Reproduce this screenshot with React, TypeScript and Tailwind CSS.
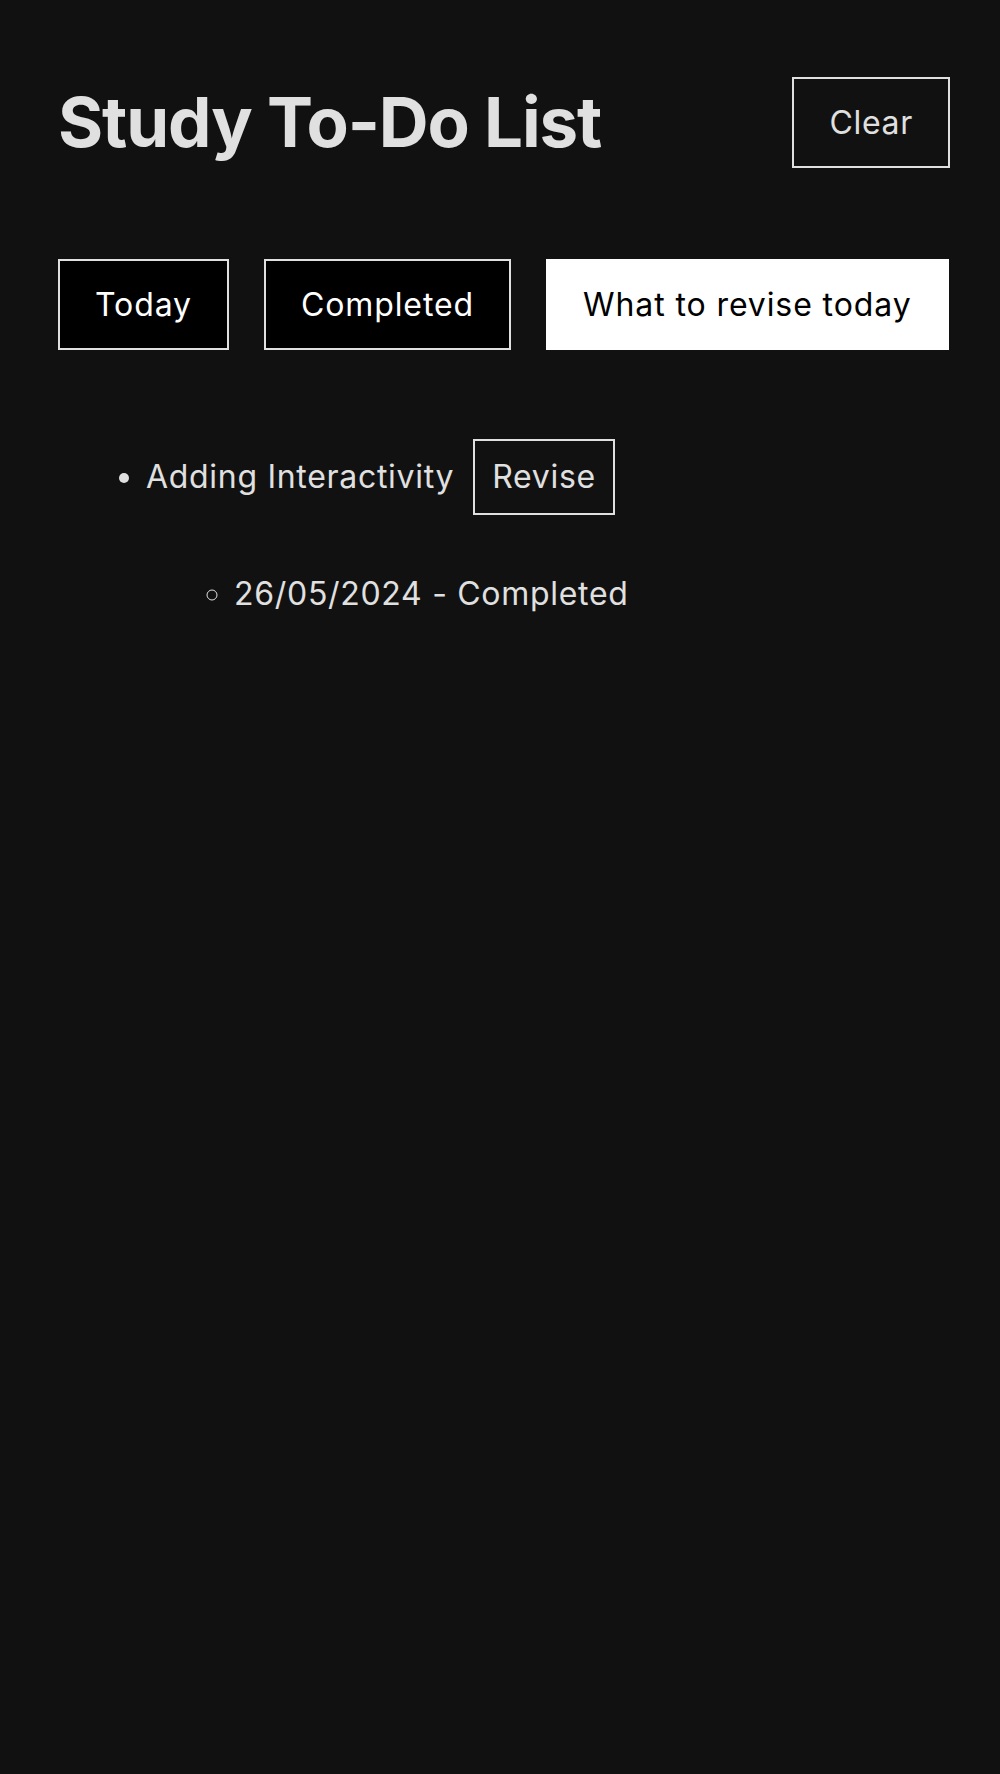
import React, { useState } from 'react';

const tabs = ['Today', 'Completed', 'What to revise today'];

export default function App() {
  const [active, setActive] = useState('What to revise today');

  return (
    <div
      className="min-h-screen bg-[#111111] text-[#e0e0e0] pl-[58px] pr-[50px] pt-[77px]"
      style={{ fontFamily: 'Inter, "Noto Sans", sans-serif' }}
    >
      {/* Header */}
      <div className="flex items-center justify-between">
        <h1 className="text-[69px] font-bold leading-none tracking-[-1.1px]">Study To-Do List</h1>
        <button className="whitespace-nowrap border-2 border-[#e0e0e0] px-[35px] py-[19px] text-[32px] leading-[49px] tracking-[0.7px] text-[#e0e0e0]">
          Clear
        </button>
      </div>

      {/* Tabs */}
      <div className="flex gap-[35px] mt-[91px]">
        {tabs.map((tab) => (
          <button
            key={tab}
            onClick={() => setActive(tab)}
            className={
              active === tab
                ? 'shrink-0 whitespace-nowrap border-2 border-white bg-white text-black px-[35px] py-[19px] text-[32px] leading-[49px] tracking-[0.9px]'
                : 'shrink-0 whitespace-nowrap border-2 border-[#e0e0e0] bg-black text-white px-[35px] py-[19px] text-[32px] leading-[49px] tracking-[0.9px]'
            }
          >
            {tab}
          </button>
        ))}
      </div>

      {/* Revise list */}
      <ul className="list-disc pl-[88px] mt-[89px] text-[32px] leading-[48px] tracking-[0.7px]">
        <li>
          <span>Adding Interactivity</span>
          <button className="ml-[19px] border-2 border-[#e0e0e0] px-[17px] py-[12px] text-[32px] leading-[48px] tracking-[0.7px]">
            Revise
          </button>
          <ul className="list-[circle] pl-[88px] mt-[55px]">
            <li>26/05/2024 - Completed</li>
          </ul>
        </li>
      </ul>
    </div>
  );
}
